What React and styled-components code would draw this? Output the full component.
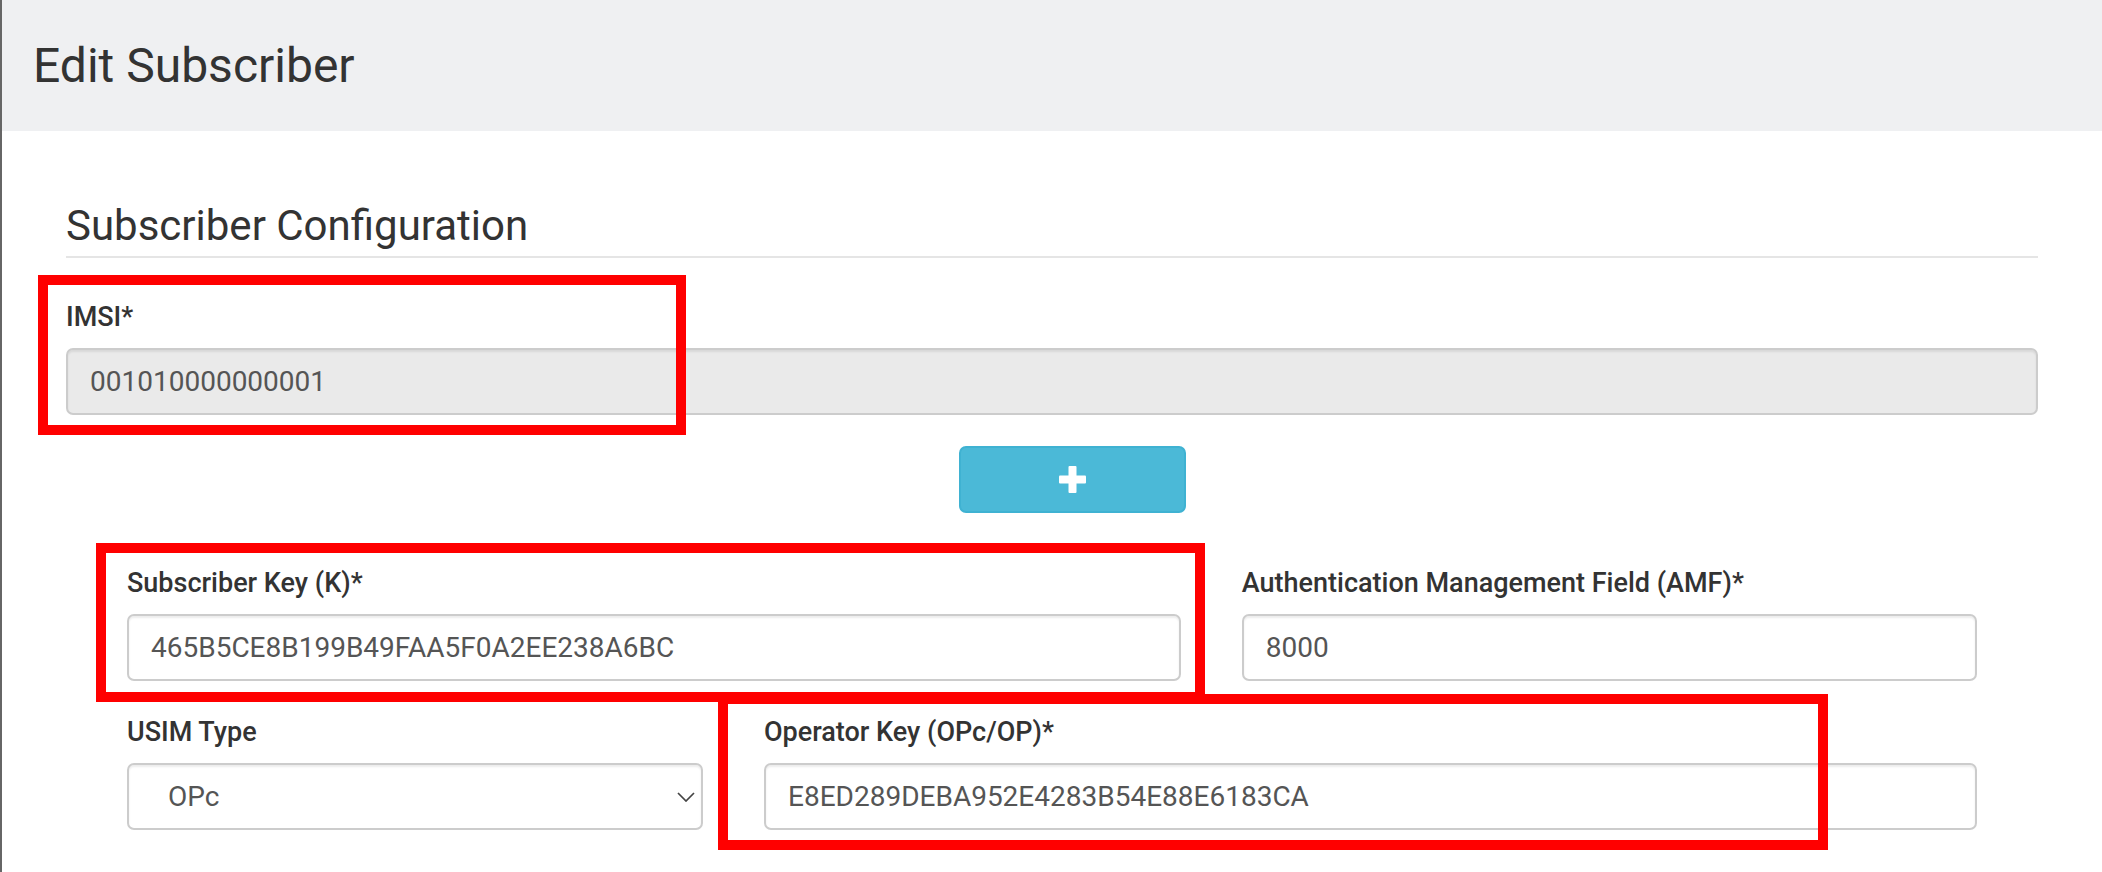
import React from 'react';
import styled, { createGlobalStyle } from 'styled-components';

const GlobalStyle = createGlobalStyle`
  html, body {
    margin: 0;
    padding: 0;
    background: #ffffff;
  }
  body {
    font-family: Roboto, "Liberation Sans", Arial, sans-serif;
    color: #333333;
  }
  * {
    box-sizing: border-box;
  }
`;

const App = () => {
  return (
    <>
      <GlobalStyle />
      <Page>
        <Header>
          <PageTitle>Edit Subscriber</PageTitle>
        </Header>
        <Content>
          <SectionTitle>Subscriber Configuration</SectionTitle>

          <Field $top={40}>
            <Label>IMSI*</Label>
            <Input disabled value="001010000000001" readOnly />
            <Highlight $left={-28} $top={-23} $w={648} $h={160} />
          </Field>

          <ButtonRow>
            <AddButton type="button" aria-label="add">
              <PlusIcon />
            </AddButton>
          </ButtonRow>

          <SubForm>
            <Col $span={7}>
              <Label>Subscriber Key (K)*</Label>
              <Input value="465B5CE8B199B49FAA5F0A2EE238A6BC" readOnly />
              <Highlight $left={-31} $top={-21} $w={1109} $h={159} />
            </Col>
            <Col $span={5}>
              <Label>Authentication Management Field (AMF)*</Label>
              <Input value="8000" readOnly />
            </Col>
            <Col $span={4}>
              <Label>USIM Type</Label>
              <SelectWrap>
                <Select defaultValue="OPc">
                  <option value="OPc">OPc</option>
                  <option value="OP">OP</option>
                </Select>
                <Chevron />
              </SelectWrap>
            </Col>
            <Col $span={8}>
              <Label>Operator Key (OPc/OP)*</Label>
              <Input value="E8ED289DEBA952E4283B54E88E6183CA" readOnly />
              <Highlight $left={-46} $top={-19} $w={1110} $h={156} />
            </Col>
          </SubForm>
        </Content>
      </Page>
    </>
  );
};

const PlusIcon = () => (
  <svg width="27" height="27" viewBox="0 0 27 27">
    <rect x="9.5" y="0" width="8" height="27" rx="1" fill="#ffffff" />
    <rect x="0" y="9.5" width="27" height="8" rx="1" fill="#ffffff" />
  </svg>
);

const Chevron = () => (
  <ChevronBox width="18" height="10" viewBox="0 0 18 10">
    <polyline points="1,1 9,9 17,1" fill="none" stroke="#444444" strokeWidth="1.7" />
  </ChevronBox>
);

export default App;

const Page = styled.div`
  min-height: 100vh;
  border-left: 2px solid #666666;
`;

const Header = styled.div`
  display: flex;
  align-items: center;
  height: 131px;
  padding-left: 31px;
  background: #eff0f2;
`;

const PageTitle = styled.h1`
  margin: 0;
  font-size: 48px;
  font-weight: 400;
  line-height: 53px;
  color: #333333;
`;

const Content = styled.div`
  padding: 0 64px 40px 64px;
`;

const SectionTitle = styled.h2`
  margin: 72px 0 0;
  padding-bottom: 7px;
  font-size: 42px;
  font-weight: 400;
  line-height: 46px;
  color: #333333;
  border-bottom: 2px solid #e5e5e5;
`;

const Field = styled.div`
  position: relative;
  margin-top: ${(p) => p.$top}px;
`;

const Label = styled.label`
  display: block;
  margin-bottom: 12px;
  font-size: 27px;
  font-weight: 500;
  line-height: 38px;
  color: #333333;
  white-space: nowrap;
`;

const Input = styled.input`
  display: block;
  width: 100%;
  height: 67px;
  padding: 0 22px;
  font-family: Roboto, "Liberation Sans", Arial, sans-serif;
  font-size: 28px;
  color: #555555;
  background: #ffffff;
  border: 2px solid #cccccc;
  border-radius: 7px;
  box-shadow: inset 0 2px 2px rgba(0, 0, 0, 0.075);
  outline: none;

  &:disabled {
    background: #eaeaea;
    color: #555555;
    -webkit-text-fill-color: #555555;
    opacity: 1;
  }
`;

const ButtonRow = styled.div`
  display: flex;
  margin-top: 31px;
  padding-left: 893px;
`;

const AddButton = styled.button`
  display: flex;
  align-items: center;
  justify-content: center;
  width: 227px;
  height: 67px;
  padding: 0;
  background: #4bb9d7;
  border: 2px solid #3fb2d2;
  border-radius: 7px;
  cursor: pointer;
`;

const SubForm = styled.div`
  display: grid;
  grid-template-columns: repeat(12, 1fr);
  column-gap: 61px;
  row-gap: 32px;
  margin-top: 51px;
  padding: 0 61px;
`;

const Col = styled.div`
  position: relative;
  grid-column: span ${(p) => p.$span};
`;

const SelectWrap = styled.div`
  position: relative;
`;

const Select = styled.select`
  display: block;
  width: 100%;
  height: 67px;
  padding: 0 40px 0 39px;
  font-family: Roboto, "Liberation Sans", Arial, sans-serif;
  font-size: 28px;
  color: #555555;
  background: #ffffff;
  border: 2px solid #cccccc;
  border-radius: 7px;
  box-shadow: inset 0 2px 2px rgba(0, 0, 0, 0.075);
  appearance: none;
  -webkit-appearance: none;
  outline: none;
`;

const ChevronBox = styled.svg`
  position: absolute;
  right: 8px;
  top: 29px;
  pointer-events: none;
`;

const Highlight = styled.div`
  position: absolute;
  left: ${(p) => p.$left}px;
  top: ${(p) => p.$top}px;
  width: ${(p) => p.$w}px;
  height: ${(p) => p.$h}px;
  border: 10px solid #ff0000;
  pointer-events: none;
  z-index: 2;
`;
